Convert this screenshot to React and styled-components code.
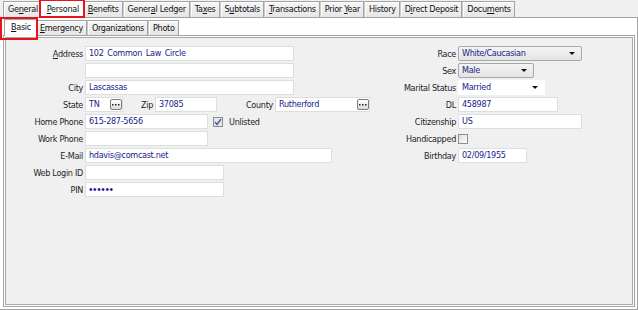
import styled, { createGlobalStyle } from "styled-components";

const GlobalStyle = createGlobalStyle`
  body {
    margin: 0;
    background: #f0f0f0;
    font-family: "DejaVu Sans Condensed", "Liberation Sans", sans-serif;
    font-size: 9px;
    letter-spacing: -0.3px;
    color: #1e1e1e;
  }
`;

const Window = styled.div`
  width: 638px;
  height: 310px;
  display: flex;
  flex-direction: column;
  background: #f0f0f0;
  overflow: hidden;
`;

const TabStrip = styled.div`
  display: flex;
  align-items: flex-end;
  height: ${(p) => (p.$sub ? 16 : 17)}px;
  padding-left: 3px;
  flex-shrink: 0;
  position: relative;
  z-index: 2;
`;

const Tab = styled.div`
  position: relative;
  height: ${(p) => (p.$active ? p.$h + 2 : p.$h)}px;
  line-height: ${(p) => (p.$active ? p.$h + 1 : p.$h)}px;
  padding: 0 ${(p) => (p.$active ? 5 : 3)}px 0 ${(p) => (p.$active ? 6 : 4)}px;
  margin: 0 ${(p) => (p.$active ? -2 : 0)}px ${(p) => (p.$active ? -1 : 0)}px;
  border: 1px solid #a3a3a3;
  border-bottom: none;
  border-left-color: ${(p) => (p.$active ? "#a3a3a3" : "#c9c9c9")};
  background: ${(p) => (p.$active ? "#ffffff" : "linear-gradient(#f6f6f6, #e6e6e6)")};
  box-shadow: inset 1px 1px 0 #fff;
  color: #111;
  white-space: nowrap;
  z-index: ${(p) => (p.$active ? 1 : 0)};

  &:first-child {
    border-left-color: #a3a3a3;
  }

  &::after {
    content: "";
    display: ${(p) => (p.$mark ? "block" : "none")};
    position: absolute;
    inset: ${(p) => p.$mark};
    border: 2px solid #e8141c;
    pointer-events: none;
  }
`;

const Key = styled.span`
  text-decoration: underline;
`;

const Page = styled.div`
  flex: 1;
  width: 632px;
  display: flex;
  flex-direction: column;
  background: #ffffff;
  border-top: 1px solid #a3a3a3;
  border-right: 1px solid #a3a3a3;
  border-bottom: 1px solid #a3a3a3;
  padding: 1px 2px 2px 3px;
`;

const Panel = styled.div`
  flex: 1;
  display: flex;
  background: #f0f0f0;
  border: 1px solid #a3a3a3;
  box-shadow: inset 0 0 0 1px #ffffff, inset 0 0 0 2px #a9a9a9;
  padding: 10px 3px 0 3px;
`;

const Column = styled.div`
  display: flex;
  flex-direction: column;
  gap: 2px;
  width: ${(p) => (p.$w ? `${p.$w}px` : "auto")};
  flex-shrink: 0;
`;

const Row = styled.div`
  display: flex;
  align-items: center;
  gap: 2px;
  height: 15px;
`;

const Label = styled.span`
  width: ${(p) => p.$w}px;
  flex-shrink: 0;
  text-align: right;
  color: #1e1e1e;
  white-space: nowrap;
`;

const Field = styled.div`
  position: relative;
  box-sizing: border-box;
  width: ${(p) => p.$w}px;
  height: 15px;
  line-height: 13px;
  padding-left: 3px;
  background: #ffffff;
  border: 1px solid #dedede;
  color: #22228c;
  white-space: nowrap;
  word-spacing: 1.5px;
`;

const Secret = styled.span`
  font-family: "Liberation Sans", sans-serif;
  font-size: 10px;
  letter-spacing: 0.6px;
  color: #1a1aa0;
`;

const Combo = styled(Field)`
  background: ${(p) => (p.$flat ? "#ffffff" : "linear-gradient(#f4f4f4, #e4e4e4)")};
  border: 1px solid ${(p) => (p.$flat ? "#ffffff" : "#a8a8a8")};
  border-radius: ${(p) => (p.$flat ? 0 : 2)}px;
`;

const Arrow = styled.span`
  position: absolute;
  right: 6px;
  top: 5px;
  width: 0;
  height: 0;
  border-left: 3px solid transparent;
  border-right: 3px solid transparent;
  border-top: 3px solid #111;
`;

const DotsButton = styled.span`
  position: absolute;
  right: 0;
  top: 1px;
  width: 12px;
  height: 11px;
  box-sizing: border-box;
  border: 1px solid #7c7c7c;
  border-radius: 2px;
  background: linear-gradient(#ffffff, #dcdcdc);
  display: flex;
  align-items: center;
  justify-content: center;
`;

const Check = styled.span`
  box-sizing: border-box;
  width: 10px;
  height: 10px;
  margin-left: ${(p) => p.$ml || 0}px;
  border: 1px solid #8e8f8f;
  background: ${(p) => (p.$on ? "#e6e6e6" : "linear-gradient(135deg, #dcdcdc, #ffffff)")};
  display: flex;
  align-items: center;
  justify-content: center;
  flex-shrink: 0;
`;

const CheckText = styled.span`
  margin-left: 4px;
  color: #1e1e1e;
`;

const Dots = () => (
  <DotsButton>
    <svg width="8" height="2" viewBox="0 0 8 2">
      <rect x="0" y="0" width="1.5" height="1.5" fill="#222" />
      <rect x="3" y="0" width="1.5" height="1.5" fill="#222" />
      <rect x="6" y="0" width="1.5" height="1.5" fill="#222" />
    </svg>
  </DotsButton>
);

const Tick = () => (
  <svg width="8" height="8" viewBox="0 0 8 8">
    <polyline points="1,4 3,6.5 7,1" fill="none" stroke="#4b5fa6" strokeWidth="1.4" />
  </svg>
);

const topTabs = [
  ["Ge", "n", "eral"],
  ["", "P", "ersonal"],
  ["", "B", "enefits"],
  ["Gener", "a", "l Ledger"],
  ["Ta", "x", "es"],
  ["S", "u", "btotals"],
  ["", "T", "ransactions"],
  ["Prior ", "Y", "ear"],
  ["History", "", ""],
  ["D", "i", "rect Deposit"],
  ["Docu", "m", "ents"],
];

const subTabs = [
  ["", "B", "asic"],
  ["", "E", "mergency"],
  ["Organizations", "", ""],
  ["Photo", "", ""],
];

const TabLabel = ({ parts }) => (
  <>
    {parts[0]}
    {parts[1] && <Key>{parts[1]}</Key>}
    {parts[2]}
  </>
);

export default function App() {
  return (
    <>
      <GlobalStyle />
      <Window>
        <TabStrip>
          {topTabs.map((t, i) => (
            <Tab key={i} $h={15} $active={i === 1} $mark={i === 1 ? "-2px -1px 0 -2px" : ""}>
              <TabLabel parts={t} />
            </Tab>
          ))}
        </TabStrip>
        <Page>
          <TabStrip $sub>
            {subTabs.map((t, i) => (
              <Tab key={i} $h={14} $active={i === 0} $mark={i === 0 ? "-3px -2px -4px -5px" : ""}>
                <TabLabel parts={t} />
              </Tab>
            ))}
          </TabStrip>
          <Panel>
            <Column $w={373}>
              <Row>
                <Label $w={76}>
                  <Key>A</Key>ddress
                </Label>
                <Field $w={209}>102 Common Law Circle</Field>
              </Row>
              <Row>
                <Label $w={76} />
                <Field $w={209} />
              </Row>
              <Row>
                <Label $w={76}>City</Label>
                <Field $w={209}>Lascassas</Field>
              </Row>
              <Row>
                <Label $w={76}>State</Label>
                <Field $w={38}>
                  TN
                  <Dots />
                </Field>
                <Label $w={28}>Zip</Label>
                <Field $w={62}>37085</Field>
                <Label $w={54}>County</Label>
                <Field $w={95}>
                  Rutherford
                  <Dots />
                </Field>
              </Row>
              <Row>
                <Label $w={76}>Home Phone</Label>
                <Field $w={123}>615-287-5656</Field>
                <Check $on $ml={3}>
                  <Tick />
                </Check>
                <CheckText>Unlisted</CheckText>
              </Row>
              <Row>
                <Label $w={76}>Work Phone</Label>
                <Field $w={123} />
              </Row>
              <Row>
                <Label $w={76}>E-Mail</Label>
                <Field $w={247}>hdavis@comcast.net</Field>
              </Row>
              <Row>
                <Label $w={76}>Web Login ID</Label>
                <Field $w={139} />
              </Row>
              <Row>
                <Label $w={76}>PIN</Label>
                <Field $w={139}>
                  <Secret>••••••</Secret>
                </Field>
              </Row>
            </Column>
            <Column>
              <Row>
                <Label $w={76}>Race</Label>
                <Combo $w={124}>
                  White/Caucasian
                  <Arrow />
                </Combo>
              </Row>
              <Row>
                <Label $w={76}>Sex</Label>
                <Combo $w={76}>
                  Male
                  <Arrow />
                </Combo>
              </Row>
              <Row>
                <Label $w={76}>Marital Status</Label>
                <Combo $w={87} $flat>
                  Married
                  <Arrow />
                </Combo>
              </Row>
              <Row>
                <Label $w={76}>DL</Label>
                <Field $w={100}>458987</Field>
              </Row>
              <Row>
                <Label $w={76}>Citizenship</Label>
                <Field $w={124}>US</Field>
              </Row>
              <Row>
                <Label $w={76}>Handicapped</Label>
                <Check />
              </Row>
              <Row>
                <Label $w={76}>Birthday</Label>
                <Field $w={69}>02/09/1955</Field>
              </Row>
            </Column>
          </Panel>
        </Page>
      </Window>
    </>
  );
}
